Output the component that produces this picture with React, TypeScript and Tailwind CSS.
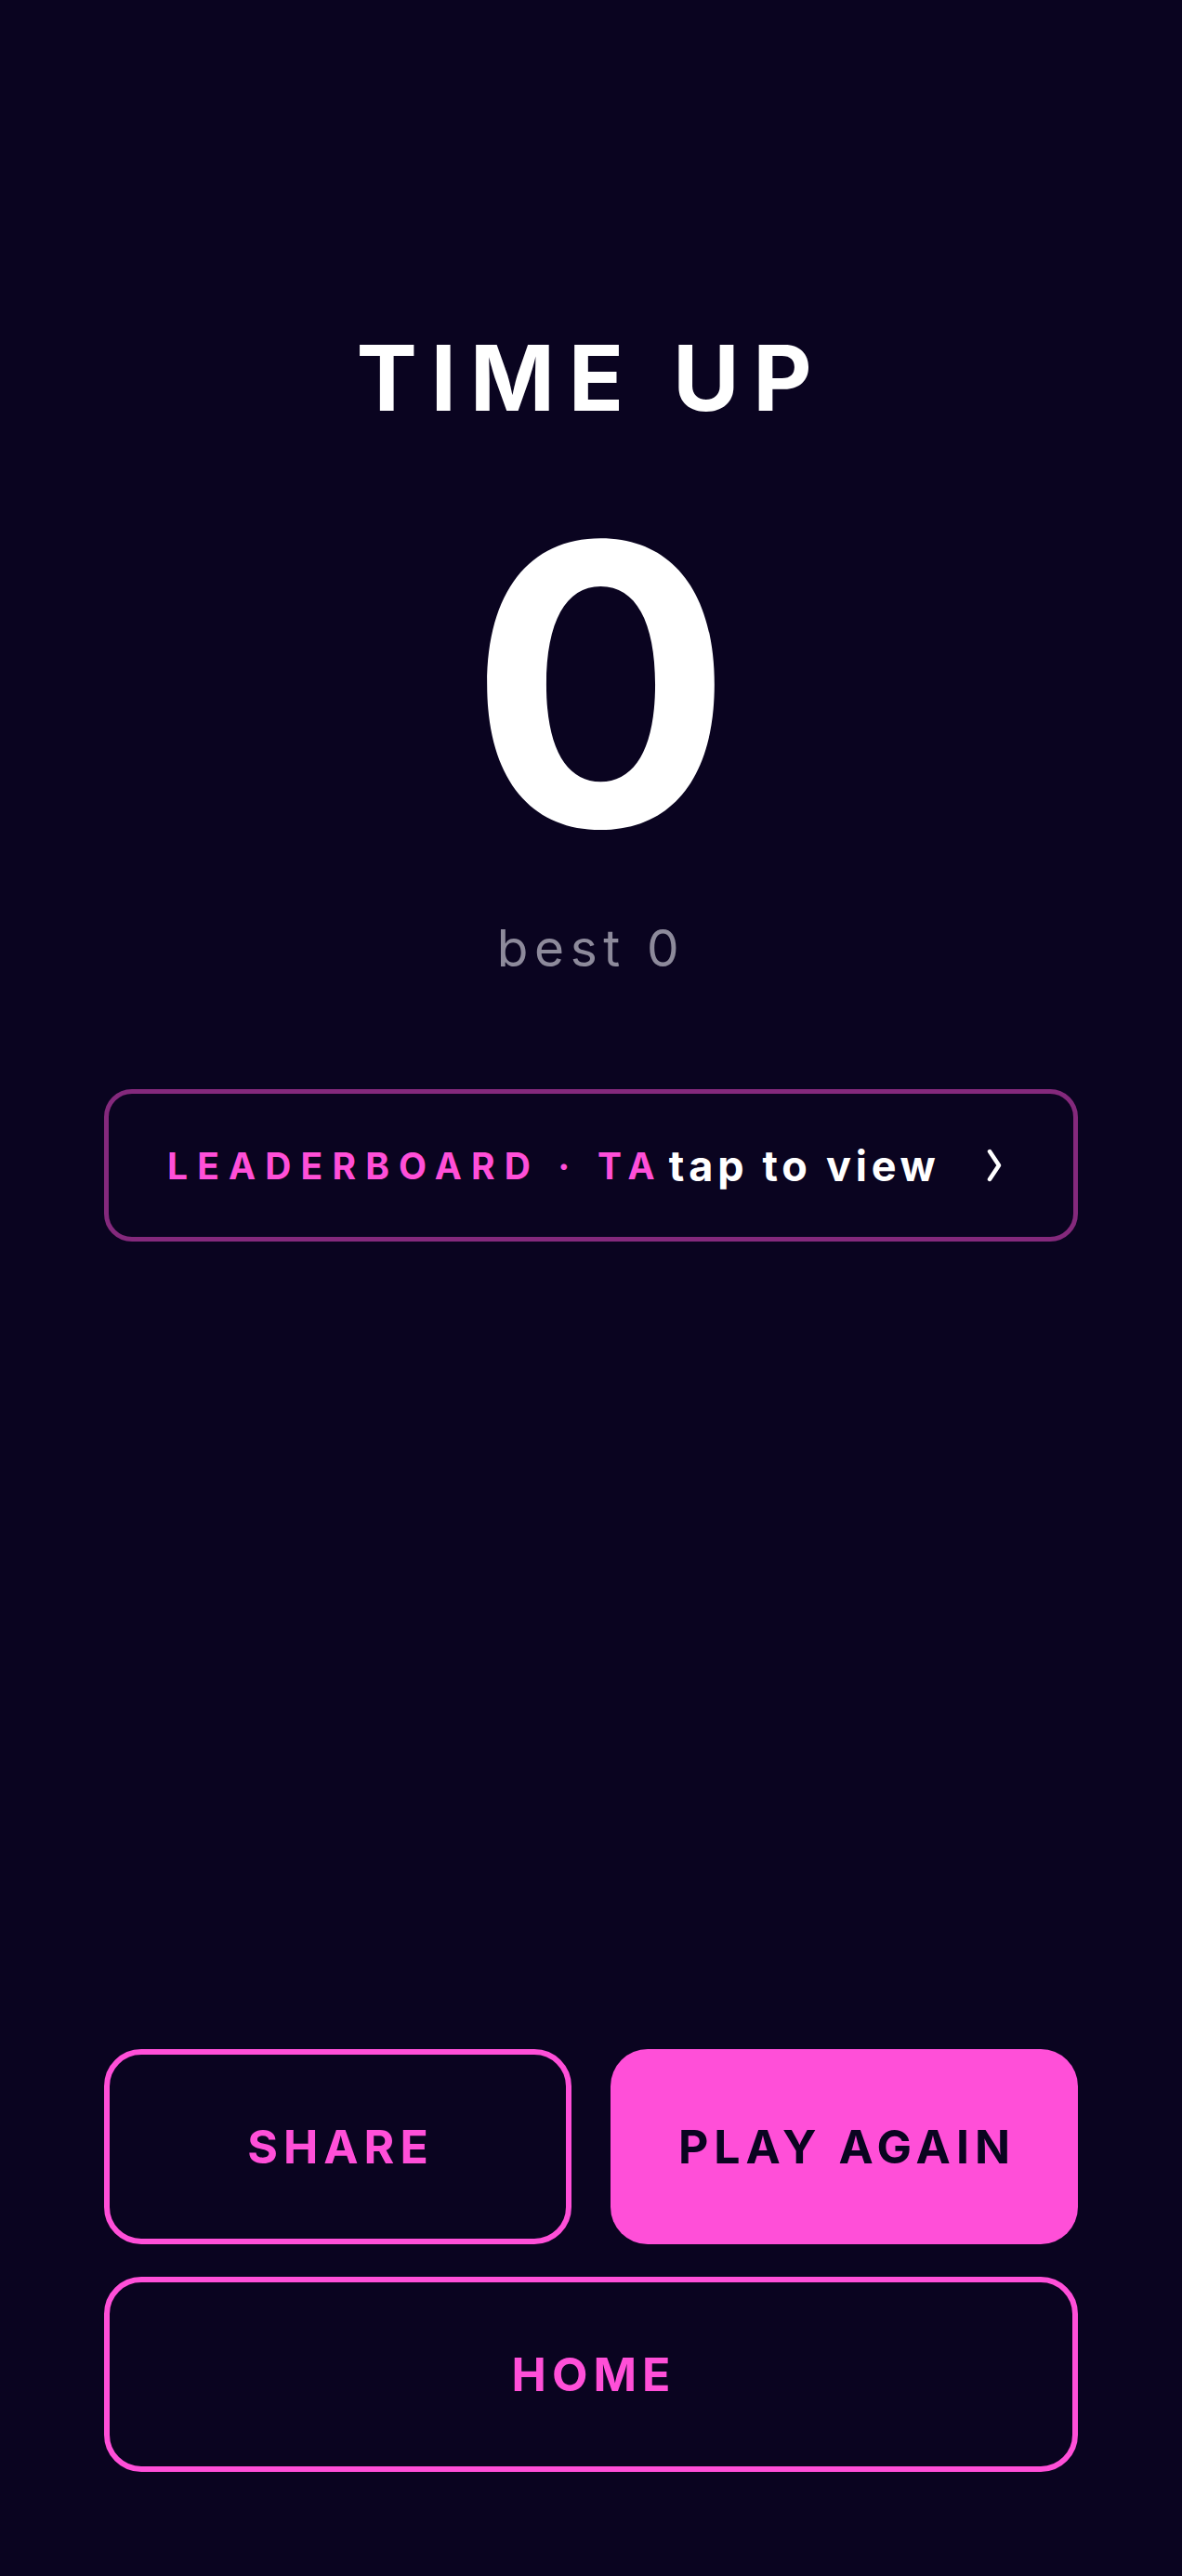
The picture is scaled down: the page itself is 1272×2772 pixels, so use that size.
import React from "react";

export default function App() {
  return (
    <div className="min-h-screen bg-[#0a0420] font-[Inter,sans-serif] flex flex-col px-[112px] pb-[112px]">
      <div className="pt-[358px] text-center text-white font-bold text-[98px] leading-none tracking-[0.15em]">
        TIME UP
      </div>
      <div className="mt-[70px] text-center text-white font-bold text-[420px] leading-none tracking-[-0.05em]">
        0
      </div>
      <div className="mt-[47px] text-center text-[#8d8a9b] text-[55px] leading-none tracking-[0.12em]">
        best 0
      </div>
      <button className="mt-[124px] h-[164px] rounded-[30px] border-[5px] border-[#84297c] flex items-center pl-[63px] pr-[88px] text-left">
        <span className="text-[#ff4fd8] text-[39px] leading-none font-bold tracking-[0.26em] whitespace-nowrap">
          LEADERBOARD · TA
        </span>
        <span className="ml-[5px] text-white text-[45px] leading-none font-bold tracking-[0.105em] whitespace-nowrap">
          tap to view
        </span>
        <svg
          className="ml-[50px] shrink-0"
          width="16"
          height="36"
          viewBox="0 0 16 36"
          fill="none"
        >
          <polyline
            points="3,3 13,18 3,33"
            stroke="white"
            strokeWidth="4.5"
            strokeLinecap="round"
            strokeLinejoin="round"
          />
        </svg>
      </button>
      <div className="flex-1" />
      <div className="grid grid-cols-2 gap-x-[42px] gap-y-[35px]">
        <button className="h-[210px] rounded-[40px] border-[6px] border-[#ff4fd8] flex items-center justify-center pl-[6px] text-[#ff4fd8] text-[50px] leading-none font-bold tracking-[6px]">
          SHARE
        </button>
        <button className="h-[210px] rounded-[40px] bg-[#ff4fd8] flex items-center justify-center pl-[6px] text-[#0a0420] text-[50px] leading-none font-bold tracking-[6px]">
          PLAY AGAIN
        </button>
        <button className="col-span-2 h-[210px] rounded-[40px] border-[6px] border-[#ff4fd8] flex items-center justify-center pl-[6px] text-[#ff4fd8] text-[50px] leading-none font-bold tracking-[6px]">
          HOME
        </button>
      </div>
    </div>
  );
}
